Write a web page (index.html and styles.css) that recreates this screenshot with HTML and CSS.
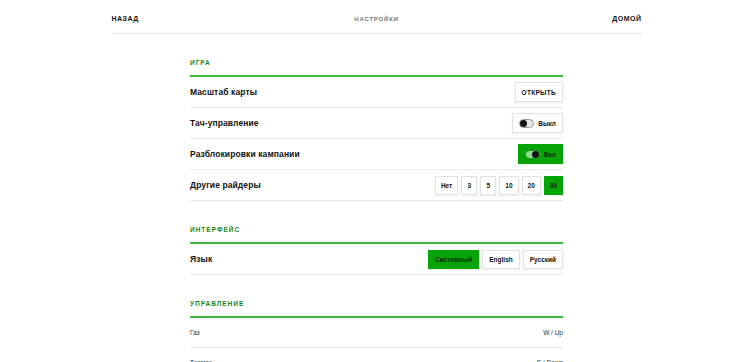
FILE: index.html
```html
<!DOCTYPE html>
<html lang="ru">

<head>
  <meta charset="UTF-8">
  <meta name="viewport" content="width=device-width, initial-scale=1.0">
  <title>Настройки</title>
  <link rel="stylesheet" href="styles.css">
</head>

<body>
  <header class="topbar">
    <a class="nav-link">НАЗАД</a>
    <span class="page-title">НАСТРОЙКИ</span>
    <a class="nav-link">ДОМОЙ</a>
  </header>

  <main class="settings">
    <section class="group">
      <h2 class="group-title">ИГРА</h2>
      <div class="row">
        <span class="label">Масштаб карты</span>
        <div class="controls">
          <button class="btn btn-caps">ОТКРЫТЬ</button>
        </div>
      </div>
      <div class="row">
        <span class="label">Тач-управление</span>
        <div class="controls">
          <button class="btn toggle"><span class="switch"></span>Выкл</button>
        </div>
      </div>
      <div class="row">
        <span class="label">Разблокировки кампании</span>
        <div class="controls">
          <button class="btn toggle active"><span class="switch on"></span>Вкл</button>
        </div>
      </div>
      <div class="row">
        <span class="label">Другие райдеры</span>
        <div class="controls">
          <button class="btn small">Нет</button>
          <button class="btn small">3</button>
          <button class="btn small">5</button>
          <button class="btn small">10</button>
          <button class="btn small">20</button>
          <button class="btn small active">30</button>
        </div>
      </div>
    </section>

    <section class="group">
      <h2 class="group-title">ИНТЕРФЕЙС</h2>
      <div class="row">
        <span class="label">Язык</span>
        <div class="controls">
          <button class="btn small lang active">Системный</button>
          <button class="btn small lang">English</button>
          <button class="btn small lang">Русский</button>
        </div>
      </div>
    </section>

    <section class="group">
      <h2 class="group-title">УПРАВЛЕНИЕ</h2>
      <div class="row key-row">
        <span class="key-label">Газ</span>
        <span class="key-value">W / Up</span>
      </div>
      <div class="row key-row">
        <span class="key-label">Тормоз</span>
        <span class="key-value">S / Down</span>
      </div>
    </section>
  </main>
</body>

</html>
```

FILE: styles.css
```css
body {
  font-family: 'Liberation Sans', Arial, sans-serif;
  margin: 0;
  padding: 0;
  background: #fff;
  color: #111;
}

.topbar {
  width: 530px;
  margin: 0 auto;
  display: flex;
  justify-content: space-between;
  align-items: center;
  padding: 14px 0 9px;
  line-height: 10px;
  border-bottom: 1px solid #e6e6e6;
}

.nav-link {
  font-size: 7px;
  font-weight: bold;
  letter-spacing: 0.5px;
  color: #111;
  cursor: pointer;
}

.page-title {
  font-size: 6px;
  font-weight: bold;
  letter-spacing: 0.8px;
  color: #777;
  margin-left: 2px;
}

.settings {
  width: 373px;
  margin: 0 auto;
}

.group {
  margin-top: 24px;
}

.group-title {
  margin: 0;
  font-size: 6.5px;
  line-height: 10px;
  font-weight: bold;
  letter-spacing: 1px;
  color: #17861a;
  padding-bottom: 7px;
  border-bottom: 2px solid #3fb43f;
}

.row {
  display: flex;
  justify-content: space-between;
  align-items: center;
  height: 30px;
  border-bottom: 1px solid #e8e8e8;
}

.label {
  font-size: 8.5px;
  font-weight: bold;
  letter-spacing: 0.1px;
}

.controls {
  display: flex;
  gap: 3px;
}

.btn {
  font-family: inherit;
  font-size: 6.5px;
  font-weight: bold;
  color: #111;
  background: #fff;
  border: 1px solid #e2e2e2;
  box-shadow: 0 1px 2px rgba(0, 0, 0, 0.08);
  height: 20px;
  padding: 0 6px;
  cursor: pointer;
}

.btn-caps {
  letter-spacing: 0.3px;
}

.btn.small {
  height: 19px;
  padding: 0 5px;
  min-width: 16px;
}

.btn.small.lang {
  padding: 0 6px;
}

.btn.active {
  background: #06a406;
  border-color: #06a406;
  color: #0b2a0b;
}

.toggle {
  display: flex;
  align-items: center;
  gap: 4px;
  padding: 0 6px;
}

.switch {
  position: relative;
  display: inline-block;
  width: 13px;
  height: 7px;
  border: 1px solid #9a9a9a;
  border-radius: 5px;
  background: #e4e4e4;
}

.switch::after {
  content: '';
  position: absolute;
  top: 0;
  left: 0;
  width: 7px;
  height: 7px;
  border-radius: 50%;
  background: #111;
}

.switch.on {
  background: #8ce08c;
  border-color: #2a8a2a;
}

.switch.on::after {
  left: 6px;
}

.key-row {
  height: 29px;
}

.key-label,
.key-value {
  font-size: 6.5px;
  color: #333;
}
```
